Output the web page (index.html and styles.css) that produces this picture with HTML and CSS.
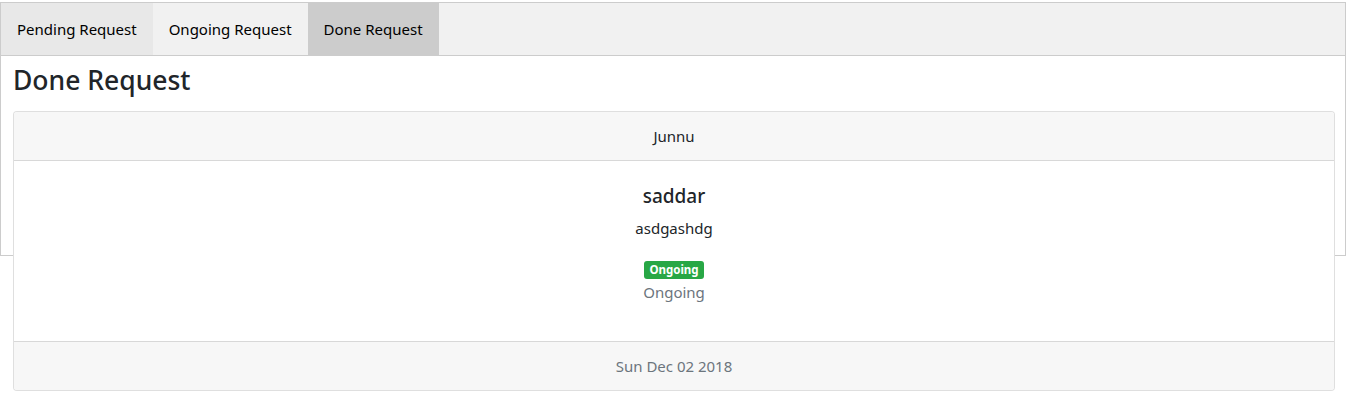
FILE: index.html
```html
<!DOCTYPE html>
<html>
<head>
<meta charset="utf-8">
<link rel="stylesheet" href="styles.css">
</head>
<body>
<div class="tab">
  <button class="tablink hovered">Pending Request</button>
  <button class="tablink">Ongoing Request</button>
  <button class="tablink active">Done Request</button>
</div>
<div class="tabcontent">
  <h3 class="title">Done Request</h3>
  <div class="card">
    <div class="card-header">Junnu</div>
    <div class="card-body">
      <h5 class="card-title">saddar</h5>
      <p class="card-text">asdgashdg</p>
      <div class="badge-line"><span class="badge">Ongoing</span></div>
      <p class="muted status">Ongoing</p>
    </div>
    <div class="card-footer muted">Sun Dec 02 2018</div>
  </div>
</div>
</body>
</html>
```
FILE: styles.css
```css
* { box-sizing: border-box; }
html, body { margin: 0; padding: 0; }
body {
  font-family: "Noto Sans", "Open Sans", sans-serif;
  font-size: 15px;
  line-height: 1.5;
  color: #212529;
  background: #fff;
  min-height: 401px;
}
.tab {
  margin-top: 2px;
  display: flex;
  border: 1px solid #ccc;
  background: #f1f1f1;
}
.tablink {
  font-family: inherit;
  font-size: 15px;
  line-height: 24px;
  color: #000;
  background: inherit;
  border: none;
  padding: 14px 16px;
  margin: 0;
}
.tablink.hovered { background: #e8e8e8; }
.tablink.active { background: #ccc; }
.tabcontent {
  height: 200px;
  padding: 6px 12px;
  border: 1px solid #ccc;
  border-top: none;
}
.title {
  margin: 0 0 14px 0;
  font-size: 26.5px;
  font-weight: 500;
  line-height: 34px;
  padding-top: 1px;
}
.card {
  border: 1px solid rgba(0,0,0,.125);
  border-radius: 4px;
  background: #fff;
  text-align: center;
  margin-right: -2px;
}
.card-header {
  padding: 12px 20px;
  line-height: 24px;
  background: #f7f7f7;
  border-bottom: 1px solid rgba(0,0,0,.125);
  border-radius: 3px 3px 0 0;
}
.card-body { padding: 23px 20px 20px; }
.card-title {
  margin: 0 0 8px;
  font-size: 19px;
  font-weight: 500;
  line-height: 24px;
}
.card-text { margin: 0 0 16px; line-height: 24px; }
.badge-line { line-height: 24px; margin-top: 4px; }
.badge {
  display: inline-block;
  background: #28a745;
  color: #fff;
  font-size: 11.5px;
  font-weight: 700;
  line-height: 1;
  padding: 3px 5px;
  border-radius: 3px;
  vertical-align: middle;
}
.muted { color: #6c757d; }
.status { margin: 0 0 17px; line-height: 24px; }
.card-footer {
  padding: 12px 20px;
  line-height: 24px;
  background: #f7f7f7;
  border-top: 1px solid rgba(0,0,0,.125);
  border-radius: 0 0 3px 3px;
}
```
